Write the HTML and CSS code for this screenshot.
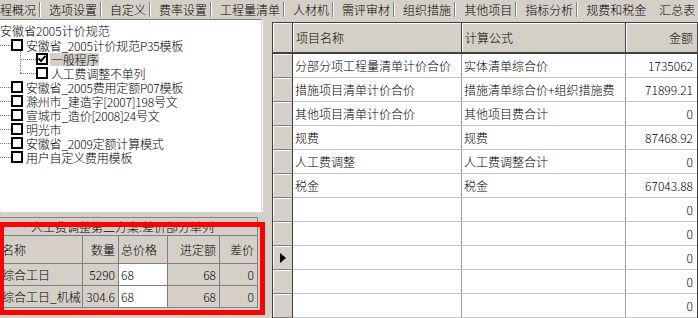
FILE: index.html
```html
<!DOCTYPE html>
<html lang="zh-CN">
<head>
<meta charset="utf-8">
<title>汇总表</title>
<link rel="stylesheet" href="styles.css">
</head>
<body>
<div class="app">
  <div class="tabs">
    <div class="tab">程概况</div>
    <div class="tab">选项设置</div>
    <div class="tab">自定义</div>
    <div class="tab">费率设置</div>
    <div class="tab">工程量清单</div>
    <div class="tab">人材机</div>
    <div class="tab">需评审材</div>
    <div class="tab">组织措施</div>
    <div class="tab">其他项目</div>
    <div class="tab">指标分析</div>
    <div class="tab pre-active">规费和税金</div>
    <div class="tab active">汇总表</div>
  </div>
  <div class="main">
    <div class="left">
      <div class="tree">
        <div class="node lvl0"><span class="lbl0">安徽省2005计价规范</span></div>
        <div class="node lvl1"><span class="conn"></span><span class="cb"></span><span class="lbl">安徽省_2005计价规范P35模板</span></div>
        <div class="node lvl2"><span class="conn"></span><span class="cb"><svg width="8" height="8" viewBox="0 0 8 8"><polyline points="0.5,3.5 3,6 7.5,0.8" fill="none" stroke="#000" stroke-width="2"/></svg></span><span class="lbl sel">一般程序</span></div>
        <div class="node lvl2 last"><span class="conn"></span><span class="cb"></span><span class="lbl">人工费调整不单列</span></div>
        <div class="node lvl1"><span class="conn"></span><span class="cb"></span><span class="lbl">安徽省_2005费用定额P07模板</span></div>
        <div class="node lvl1"><span class="conn"></span><span class="cb"></span><span class="lbl">滁州市_建造字[2007]198号文</span></div>
        <div class="node lvl1"><span class="conn"></span><span class="cb"></span><span class="lbl">宣城市_造价[2008]24号文</span></div>
        <div class="node lvl1"><span class="conn"></span><span class="cb"></span><span class="lbl">明光市</span></div>
        <div class="node lvl1"><span class="conn"></span><span class="cb"></span><span class="lbl">安徽省_2009定额计算模式</span></div>
        <div class="node lvl1"><span class="conn"></span><span class="cb"></span><span class="lbl">用户自定义费用模板</span></div>
      </div>
      <div class="cgrid">
        <div class="cap">人工费调整第二方案:差价部分单列</div>
        <div class="ch">名称</div>
        <div class="ch r">数量</div>
        <div class="ch">总价格</div>
        <div class="ch r">进定额</div>
        <div class="ch r">差价</div>
        <div class="cc">综合工日</div>
        <div class="cc r">5290</div>
        <div class="cc w">68</div>
        <div class="cc r">68</div>
        <div class="cc r">0</div>
        <div class="cc">综合工日_机械</div>
        <div class="cc r">304.6</div>
        <div class="cc w">68</div>
        <div class="cc r">68</div>
        <div class="cc r">0</div>
      </div>
    </div>
    <div class="splitter"></div>
    <div class="right">
      <div class="rgrid">
        <div class="hc"></div>
        <div class="hc">项目名称</div>
        <div class="hc">计算公式</div>
        <div class="hc r last">金额</div>

        <div class="ind"></div><div class="dc">分部分项工程量清单计价合价</div><div class="dc">实体清单综合价</div><div class="dc r last">1735062</div>
        <div class="ind"></div><div class="dc">措施项目清单计价合价</div><div class="dc">措施清单综合价+组织措施费</div><div class="dc r last">71899.21</div>
        <div class="ind"></div><div class="dc">其他项目清单计价合价</div><div class="dc">其他项目费合计</div><div class="dc r last">0</div>
        <div class="ind"></div><div class="dc">规费</div><div class="dc">规费</div><div class="dc r last">87468.92</div>
        <div class="ind"></div><div class="dc">人工费调整</div><div class="dc">人工费调整合计</div><div class="dc r last">0</div>
        <div class="ind"></div><div class="dc">税金</div><div class="dc">税金</div><div class="dc r last">67043.88</div>
        <div class="ind"></div><div class="dc"></div><div class="dc"></div><div class="dc r last">0</div>
        <div class="ind"></div><div class="dc"></div><div class="dc"></div><div class="dc r last">0</div>
        <div class="ind"><span class="ptr"></span></div><div class="dc"></div><div class="dc"></div><div class="dc r last">0</div>
        <div class="ind"></div><div class="dc"></div><div class="dc"></div><div class="dc r last">0</div>
        <div class="ind"></div><div class="dc"></div><div class="dc"></div><div class="dc r last">0</div>
      </div>
    </div>
  </div>
  <div class="annot"></div>
</div>
</body>
</html>
```

FILE: styles.css
```css
html, body {
  margin: 0;
  padding: 0;
}
body {
  width: 698px;
  height: 318px;
  overflow: hidden;
  background: #d4d0c8;
  font-family: "Noto Sans CJK SC", "Noto Sans", sans-serif;
  font-size: 12px;
  font-weight: 300;
  color: #000;
}
.app {
  position: relative;
  width: 698px;
  height: 318px;
  overflow: hidden;
  display: flex;
  flex-direction: column;
}

/* tabs */
.tabs {
  height: 19px;
  flex: none;
  display: flex;
  align-items: flex-start;
  margin-left: -9px;
  white-space: nowrap;
}
.tab {
  flex: none;
  margin-top: 2px;
  height: 15px;
  line-height: 15px;
  padding: 0 3px 0 9px;
  border-right: 1px solid #808080;
  box-shadow: 1px 0 0 #fff;
}
.tab.pre-active,
.tab.active {
  border-right-color: transparent;
  box-shadow: none;
}

/* main */
.main {
  flex: 1;
  display: flex;
  min-height: 0;
}
.left {
  width: 262px;
  flex: none;
  display: flex;
  flex-direction: column;
}
.splitter {
  width: 10px;
  flex: none;
}
.right {
  flex: 1;
  padding-top: 3px;
  min-width: 0;
}

/* tree */
.tree {
  height: 192px;
  box-sizing: border-box;
  background: #fff;
  border-top: 1px solid #808080;
  border-right: 1px solid #d4d0c8;
  box-shadow: 1px 1px 0 #fff;
  padding-top: 4px;
  overflow: hidden;
}
.node {
  position: relative;
  height: 14px;
  display: flex;
  align-items: center;
  white-space: nowrap;
}
.lbl0 {
  line-height: 14px;
}
.conn {
  flex: none;
  width: 11px;
  height: 0;
  border-top: 1px dotted #808080;
}
.lvl2 .conn {
  width: 16px;
  margin-left: 20px;
}
.lvl2::before {
  content: "";
  position: absolute;
  left: 20px;
  top: -1px;
  bottom: 0;
  border-left: 1px dotted #808080;
}
.lvl2.last::before {
  bottom: 7px;
}
.cb {
  flex: none;
  width: 12px;
  height: 12px;
  box-sizing: border-box;
  border: 2px solid #000;
  background: #fff;
  display: flex;
  align-items: center;
  justify-content: center;
}
.lbl {
  margin-left: 2px;
  padding: 0 1px;
  height: 13px;
  line-height: 13px;
  overflow: visible;
  letter-spacing: -0.2px;
}
.sel {
  background: #d4d0c8;
}

/* cost grid (bottom left) */
.cgrid {
  margin-top: 6px;
  width: 258px;
  display: grid;
  grid-template-columns: 83px 36px 49px 52px 38px;
  grid-template-rows: 18px 28px 22px 22px;
  border-top: 1px solid #808080;
}
.cap {
  grid-column: 1 / -1;
  border-bottom: 1px solid #808080;
  border-right: 1px solid #808080;
  text-align: center;
  line-height: 17px;
  padding-right: 12px;
  white-space: nowrap;
  overflow: hidden;
}
.ch, .cc {
  box-sizing: border-box;
  border-right: 1px solid #808080;
  border-bottom: 1px solid #808080;
  display: flex;
  align-items: center;
  padding: 0 2px 0 2px;
  white-space: nowrap;
  overflow: hidden;
}
.cgrid .r {
  justify-content: flex-end;
  padding-right: 3px;
}
.cc.w {
  background: #fff;
}

/* right grid */
.rgrid {
  display: grid;
  grid-template-columns: 20px 169px 164px 1fr;
  grid-template-rows: 31px repeat(11, 24px);
  border-top: 1px solid #404040;
  border-left: 1px solid #404040;
  border-right: 1px solid #404040;
}
.hc {
  box-sizing: border-box;
  background: #d4d0c8;
  border-right: 1px solid #404040;
  border-bottom: 2px solid #404040;
  box-shadow: inset 1px 1px 0 #fff;
  display: flex;
  align-items: center;
  padding-left: 3px;
  white-space: nowrap;
}
.ind {
  box-sizing: border-box;
  background: #d4d0c8;
  border-right: 1px solid #404040;
  border-bottom: 1px solid #808080;
  box-shadow: inset 1px 1px 0 #fff;
  display: flex;
  align-items: center;
  justify-content: center;
}
.ptr {
  width: 0;
  height: 0;
  border-top: 5px solid transparent;
  border-bottom: 5px solid transparent;
  border-left: 6px solid #000;
}
.dc {
  box-sizing: border-box;
  background: #fff;
  border-right: 1px solid #a0a0a0;
  border-bottom: 1px solid #c4c4c4;
  display: flex;
  align-items: center;
  padding-left: 2px;
  white-space: nowrap;
  overflow: hidden;
}
.rgrid .r {
  justify-content: flex-end;
  padding-right: 4px;
}
.rgrid .last {
  border-right: none;
}

/* red annotation frame */
.annot {
  position: absolute;
  left: -1px;
  top: 222px;
  width: 266px;
  height: 93px;
  box-sizing: border-box;
  border: 5px solid #ff0000;
  pointer-events: none;
}
```
